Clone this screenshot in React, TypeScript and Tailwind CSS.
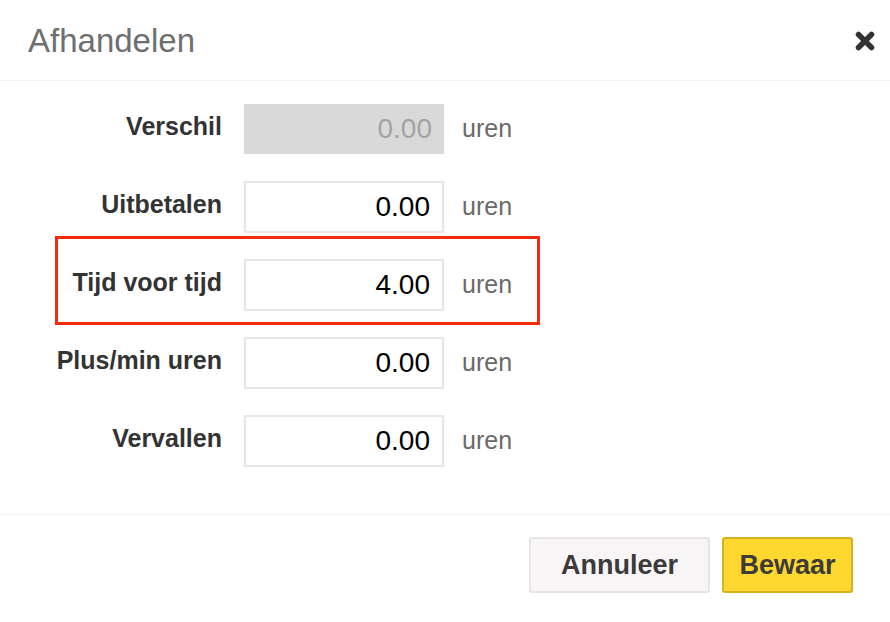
import React from "react";

const rows = [
  { label: "Verschil", value: "0.00", disabled: true },
  { label: "Uitbetalen", value: "0.00" },
  { label: "Tijd voor tijd", value: "4.00", highlight: true },
  { label: "Plus/min uren", value: "0.00" },
  { label: "Vervallen", value: "0.00" },
];

export default function App() {
  return (
    <div
      className="w-[890px] h-[622px] bg-white flex flex-col"
      style={{ fontFamily: '"Liberation Sans", Arial, sans-serif' }}
    >
      <div className="h-[81px] shrink-0 flex items-center justify-between pl-[28px] pr-[14px] border-b border-[#f3f3f3]">
        <h1 className="text-[33px] text-[#6f6f6f] leading-none">Afhandelen</h1>
        <svg width="22" height="22" viewBox="0 0 22 22" className="mt-[1px]">
          <path d="M4.5 4.5 L17.5 17.5 M17.5 4.5 L4.5 17.5" stroke="#333" strokeWidth="5.5" strokeLinecap="round" />
        </svg>
      </div>

      <div className="flex flex-col gap-[26px] pt-[22px] h-[434px] border-b border-[#f3f3f3]">
        {rows.map((r) => (
          <div key={r.label} className="relative flex items-center h-[52px]">
            {r.highlight && (
              <div className="absolute left-[55px] top-[-23px] w-[485px] h-[89px] border-[3px] border-[#f52a0c] pointer-events-none" />
            )}
            <div className="w-[222px] text-right text-[25px] font-bold text-[#333333] pb-[5px]">
              {r.label}
            </div>
            {r.disabled ? (
              <div className="ml-[22px] w-[200px] h-[50px] bg-[#d9d9d9] flex items-center justify-end pr-[12px] text-[28px] text-[#a3a3a3]">
                {r.value}
              </div>
            ) : (
              <div className="ml-[22px] w-[200px] h-[52px] bg-white border-2 border-[#e9e5e5] flex items-center justify-end pr-[12px] text-[28px] text-black">
                {r.value}
              </div>
            )}
            <div className="ml-[18px] text-[25px] text-[#6a6a6a]">uren</div>
          </div>
        ))}
      </div>

      <div className="flex justify-end gap-[12px] pt-[22px] pr-[37px]">
        <button className="w-[181px] h-[56px] rounded-[3px] bg-[#f7f5f5] border-2 border-[#e6e4e4] text-[27px] font-bold text-[#3d3a3a]">
          Annuleer
        </button>
        <button className="w-[131px] h-[56px] rounded-[3px] bg-[#fed82f] border-2 border-[#d6b21f] text-[27px] font-bold text-[#3d3a3a]">
          Bewaar
        </button>
      </div>
    </div>
  );
}
